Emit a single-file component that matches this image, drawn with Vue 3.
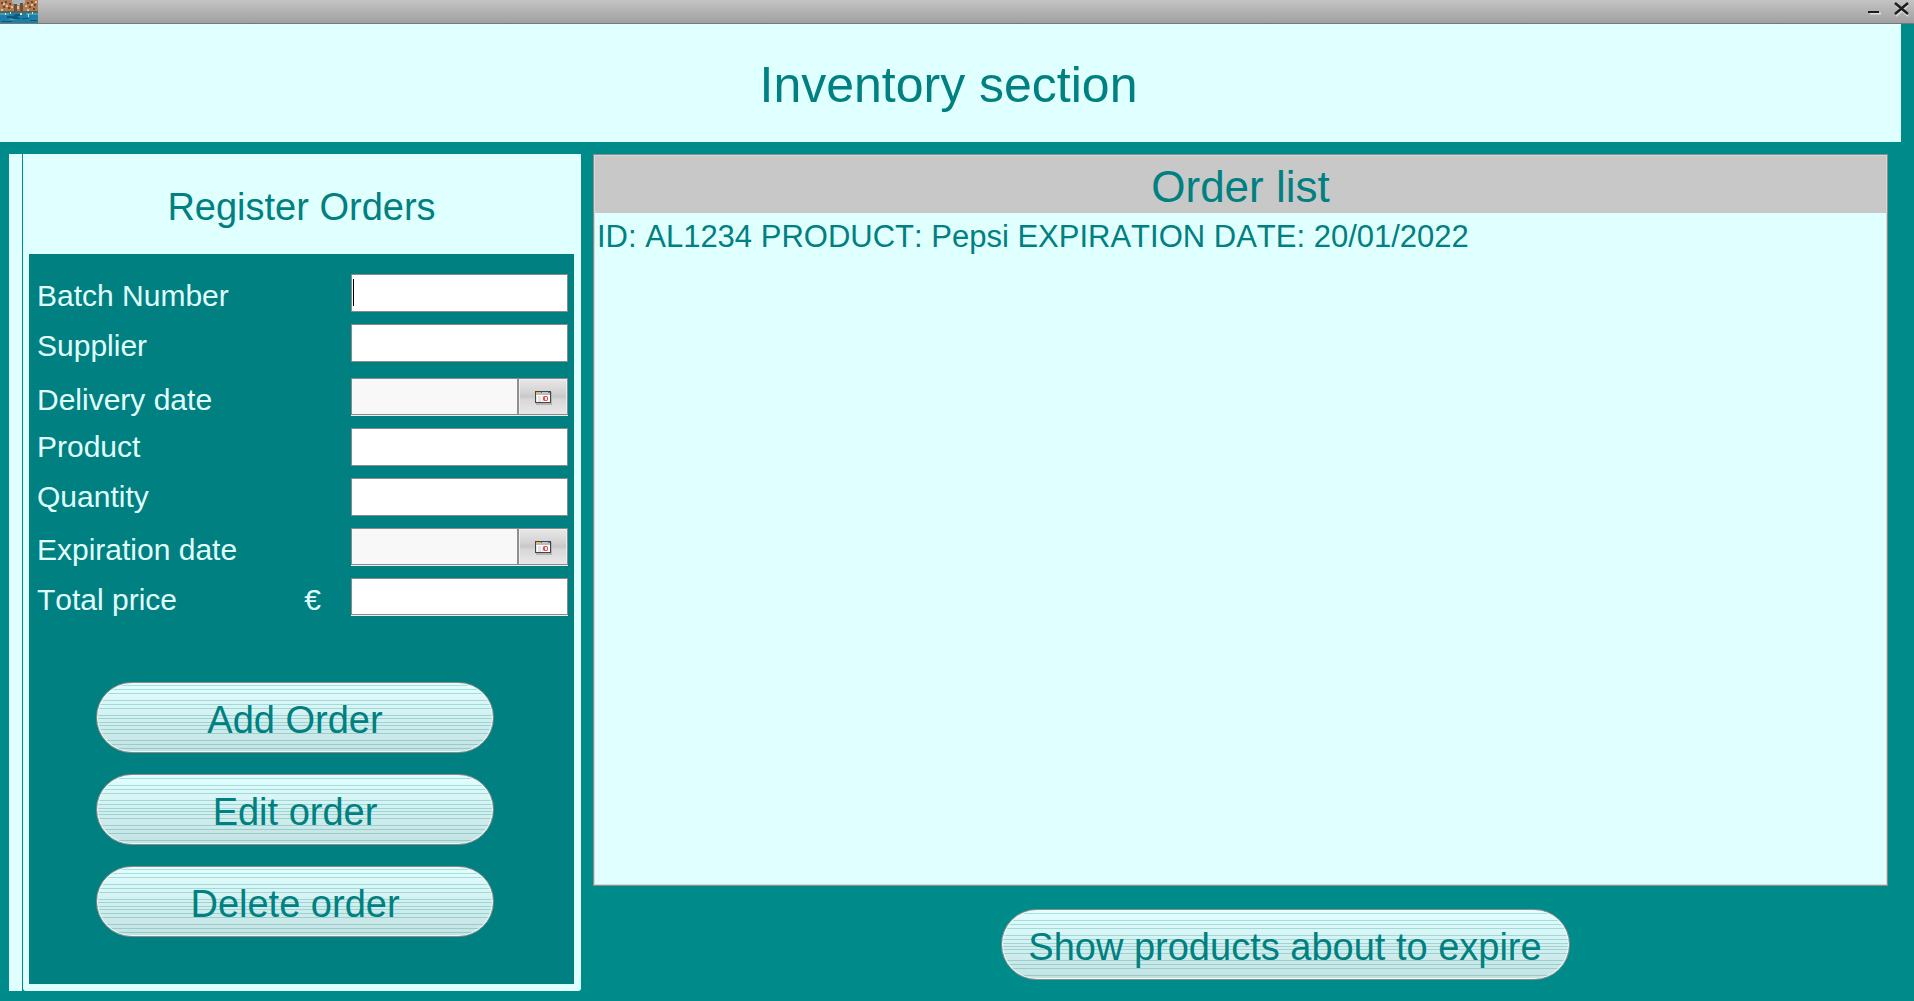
<script setup>
import { reactive } from 'vue'

const fields = [
  { id: 'batch', label: 'Batch Number', caret: true },
  { id: 'supplier', label: 'Supplier' },
  { id: 'delivery', label: 'Delivery date', date: true, spaced: true },
  { id: 'product', label: 'Product', raised: true },
  { id: 'quantity', label: 'Quantity', raised: true },
  { id: 'expiration', label: 'Expiration date', date: true },
  { id: 'price', label: 'Total price', unit: '€' },
]

const form = reactive({
  batch: '',
  supplier: '',
  delivery: '',
  product: '',
  quantity: '',
  expiration: '',
  price: '',
})

const orders = [{ id: 'AL1234', product: 'Pepsi', expires: '20/01/2022' }]
</script>

<template>
  <div class="window">
    <div class="titlebar">
      <svg class="app-icon" viewBox="0 0 38 23" aria-hidden="true">
        <rect width="38" height="23" fill="#b98a66" />
        <path d="M0 0h12l2 4h9l3-4h12v12H0z" fill="#b07a52" />
        <path d="M12 0h13v3l-2 2h-8l-3-2z" fill="#a9b4bd" />
        <path d="M14 4h3v7h-3zM20 3h3v8h-3z" fill="#67503f" />
        <path d="M1 2h2v2H1zM5 1h2v2H5zM9 3h2v2H9zM3 6h2v2H3zM8 7h2v2H8zM27 2h2v2h-2zM31 1h2v2h-2zM34 4h2v2h-2zM29 6h2v2h-2zM33 8h2v2h-2z" fill="#6d4630" />
        <path d="M3 3h2v2H3zM6 5h2v2H6zM11 6h2v2h-2zM17 6h2v3h-2zM25 5h2v2h-2zM31 4h2v2h-2zM35 1h2v2h-2zM27 9h2v2h-2zM1 9h2v2H1z" fill="#e6bf94" />
        <rect y="11" width="38" height="2" fill="#56645c" />
        <rect y="13" width="38" height="10" fill="#1c7fa8" />
        <path d="M0 13h9v2H0zM26 13h12v2H26zM9 19h6v1H9z" fill="#3aa0bf" />
        <path d="M7 16h6l3-2h4v2h-3l4 3h-7l-2-1H7zM22 18h6v1h-6zM2 21h10v1H2zM30 20h7v1h-7z" fill="#135778" />
        <path d="M5 13h1v2H5zM10 12h1v2h-1zM20 13h2v2h-2zM28 14h1v3h-1zM32 12h1v2h-1z" fill="#f0e6ae" />
      </svg>
      <div class="window-controls">
        <button type="button" class="window-button" aria-label="Minimise">
          <svg viewBox="0 0 16 16" aria-hidden="true">
            <path d="M2 12.5h11" stroke="#dedede" stroke-width="2" />
            <path d="M0 11h11" stroke="#1c1c1c" stroke-width="2" />
          </svg>
        </button>
        <button type="button" class="window-button" aria-label="Close">
          <svg viewBox="0 0 16 16" aria-hidden="true">
            <path d="M2 4l12 11M14 4L2 15" stroke="#dadada" stroke-width="2" />
            <path d="M1 2l13 11M14 2L1 13" stroke="#1c1c1c" stroke-width="2.4" />
          </svg>
        </button>
      </div>
    </div>

    <header class="banner">
      <h1>Inventory section</h1>
    </header>

    <main class="content">
      <div class="rail"></div>

      <section class="register">
        <h2>Register Orders</h2>
        <form class="register-body" @submit.prevent>
          <div class="fields">
            <div
              v-for="field in fields"
              :key="field.id"
              class="row"
              :class="{ spaced: field.spaced, raised: field.raised }"
            >
              <label :for="field.id">{{ field.label }}</label>
              <span v-if="field.unit" class="unit">{{ field.unit }}</span>
              <div class="control" :class="{ date: field.date, lit: field.date || field.unit }">
                <input
                  :id="field.id"
                  v-model="form[field.id]"
                  type="text"
                  :readonly="field.date"
                />
                <span v-if="field.caret" class="caret"></span>
                <button v-if="field.date" type="button" class="picker" :aria-label="'Choose ' + field.label">
                  <svg viewBox="0 0 17 14" shape-rendering="crispEdges" aria-hidden="true">
                    <path d="M1 12h15v2H1zM16 1h1v13h-1z" fill="#b4b4b4" />
                    <rect width="16" height="12" fill="#444" />
                    <rect x="1" y="1" width="14" height="10" fill="#fff" />
                    <rect x="1" y="1" width="5" height="1" fill="#f5b32e" />
                    <rect x="6" y="1" width="1" height="1" fill="#666" />
                    <rect x="7" y="1" width="6" height="1" fill="#a9d0fb" />
                    <rect x="13" y="1" width="2" height="1" fill="#777" />
                    <rect x="1" y="2" width="14" height="2" fill="#bdbdbd" />
                    <path d="M3 5h3v6H3zM1 5h1v6H1zM7 5h1v6H7z" fill="#e4e4e4" />
                    <rect x="8" y="5" width="5" height="5" fill="#f2b5b5" />
                    <path d="M9 5h3v1H9zM8 6h2v3H8zM12 6h1v3h-1zM9 9h3v1H9z" fill="#e55353" />
                    <rect x="10" y="6" width="2" height="3" fill="#fde8e8" />
                  </svg>
                </button>
              </div>
            </div>
          </div>

          <div class="actions">
            <button type="submit" class="pill stripes-a">Add Order</button>
            <button type="button" class="pill stripes-b">Edit order</button>
            <button type="button" class="pill stripes-a">Delete order</button>
          </div>
        </form>
      </section>

      <section class="orders">
        <div class="order-list">
          <h2>Order list</h2>
          <ul>
            <li v-for="order in orders" :key="order.id">
              ID: {{ order.id }} PRODUCT: {{ order.product }} EXPIRATION DATE: {{ order.expires }}
            </li>
          </ul>
        </div>
        <div class="orders-footer">
          <button type="button" class="pill stripes-b">Show products about to expire</button>
        </div>
      </section>
    </main>
  </div>
</template>

<style>
body {
  margin: 0;
  background: #008b8b;
}
</style>

<style scoped>
* {
  box-sizing: border-box;
}

.window {
  display: flex;
  flex-direction: column;
  min-height: 100vh;
  background: #008b8b;
  color: #008080;
  font-family: "Liberation Sans", Arial, sans-serif;
  font-kerning: none;
}

h1,
h2,
ul {
  margin: 0;
  padding: 0;
  font-weight: 400;
}

button {
  padding: 0;
  border: 0;
  background: none;
  color: inherit;
  font-family: inherit;
}

.titlebar {
  display: flex;
  justify-content: space-between;
  height: 24px;
  border-bottom: 1px solid #777;
  background: linear-gradient(#c4c4c4, #a0a0a0);
}

.app-icon {
  display: block;
  width: 38px;
  height: 23px;
}

.window-controls {
  display: flex;
  gap: 10px;
  padding: 1px 4px 0 0;
}

.window-button {
  width: 16px;
  height: 16px;
}

.window-button svg {
  display: block;
  width: 16px;
  height: 16px;
}

.banner {
  display: flex;
  align-items: center;
  justify-content: center;
  height: 118px;
  margin-right: 13px;
  padding: 4px 4px 0 0;
  background: #e0ffff;
}

.banner h1 {
  font-size: 50px;
  line-height: 60px;
}

.content {
  display: flex;
  flex: 1;
  padding: 12px 26px 10px 9px;
}

.rail {
  flex-shrink: 0;
  width: 13px;
  margin-right: 1px;
  background: #e0ffff;
}

.register {
  display: flex;
  flex-direction: column;
  flex-shrink: 0;
  width: 558px;
  padding: 0 7px 7px 6px;
  border-radius: 0 0 3px 3px;
  background: #e0ffff;
}

.register h2 {
  padding-top: 6px;
  font-size: 38px;
  line-height: 94px;
  text-align: center;
}

.register-body {
  flex: 1;
  padding: 20px 6px 46px 8px;
  background: #008080;
}

.fields {
  display: flex;
  flex-direction: column;
  gap: 12px;
}

.row {
  display: flex;
  height: 38px;
  color: #e0ffff;
  font-size: 30px;
  line-height: 38px;
}

.row label {
  flex: 1;
}

.row label,
.row .unit {
  padding-top: 3px;
}

.row.spaced {
  margin-top: 4px;
}

.row.raised label {
  padding-top: 0;
}

.unit {
  margin-right: 30px;
}

.control {
  position: relative;
  display: flex;
  width: 217px;
  border: 1px solid #8a8a8a;
  background: #fff;
}

.control.lit {
  height: 37px;
  box-shadow: 0 1px #e4f2f2;
}

.control.date {
  background: #f8f8f8;
}

.control input {
  flex: 1;
  min-width: 0;
  padding: 0 2px;
  border: 0;
  outline: 0;
  background: transparent;
  color: #000;
  font-family: inherit;
  font-size: 24px;
}

.caret {
  position: absolute;
  top: 4px;
  left: 1px;
  width: 1px;
  height: 27px;
  background: #000;
}

.picker {
  display: flex;
  align-items: center;
  justify-content: center;
  width: 50px;
  padding-top: 2px;
  border-left: 2px solid #8f8f8f;
  background: linear-gradient(#e8e8e8, #d2d2d2 40%, #c8c8c8 50%, #d8d8d8 60%, #e8e8e8);
  box-shadow: inset 1px 1px #eee, inset -1px 0 #eee;
}

.picker svg {
  width: 17px;
  height: 14px;
}

.actions {
  display: flex;
  flex-direction: column;
  align-items: center;
  gap: 21px;
  margin-top: 66px;
  padding-right: 15px;
}

.pill {
  height: 71px;
  padding-top: 4px;
  border: 1px solid #8c8c8c;
  border-radius: 36px;
  box-shadow: inset 0 0 0 1px #eefafa;
  font-size: 38px;
  line-height: 44px;
}

.actions .pill {
  width: 398px;
}

.orders-footer .pill {
  width: 569px;
}

.stripes-a {
  --line: rgba(0, 128, 128, 0.25);
  background:
    linear-gradient(
      transparent 2px, var(--line) 2px 3px, transparent 3px 6px, var(--line) 6px 7px,
      transparent 7px 10px, var(--line) 10px 11px, transparent 11px 17px, var(--line) 17px 18px,
      transparent 18px 21px, var(--line) 21px 22px, transparent 22px 25px, var(--line) 25px 26px,
      transparent 26px 32px, var(--line) 32px 33px, transparent 33px 35px, var(--line) 35px 36px,
      transparent 36px 39px, var(--line) 39px 40px, transparent 40px 42px, var(--line) 42px 43px,
      transparent 43px 46px, var(--line) 46px 47px, transparent 47px 50px, var(--line) 50px 51px,
      transparent 51px 57px, var(--line) 57px 58px, transparent 58px 61px, var(--line) 61px 62px,
      transparent 62px 65px, var(--line) 65px 66px, transparent 66px
    ),
    linear-gradient(#e2ffff, #c4e2e2);
}

.stripes-b {
  --line: rgba(0, 128, 128, 0.25);
  background:
    linear-gradient(
      transparent 3px, var(--line) 3px 4px, transparent 4px 10px, var(--line) 10px 11px,
      transparent 11px 14px, var(--line) 14px 15px, transparent 15px 18px, var(--line) 18px 19px,
      transparent 19px 25px, var(--line) 25px 26px, transparent 26px 29px, var(--line) 29px 30px,
      transparent 30px 33px, var(--line) 33px 34px, transparent 34px 36px, var(--line) 36px 37px,
      transparent 37px 39px, var(--line) 39px 40px, transparent 40px 43px, var(--line) 43px 44px,
      transparent 44px 50px, var(--line) 50px 51px, transparent 51px 54px, var(--line) 54px 55px,
      transparent 55px 58px, var(--line) 58px 59px, transparent 59px 65px, var(--line) 65px 66px,
      transparent 66px
    ),
    linear-gradient(#e2ffff, #c4e2e2);
}

.orders {
  display: flex;
  flex: 1;
  flex-direction: column;
  margin-left: 12px;
  padding-bottom: 11px;
}

.order-list {
  flex: 1;
  border: 1px solid #8c8c8c;
  border-bottom-width: 2px;
  outline: 1px solid #d8d8d8;
  outline-offset: -2px;
  background: #e0ffff;
}

.order-list h2 {
  padding-top: 6px;
  background: #c8c8c8;
  font-size: 44px;
  line-height: 52px;
  text-align: center;
}

.order-list li {
  padding: 0 3px;
  font-size: 31px;
  line-height: 47px;
  list-style: none;
}

.orders-footer {
  display: flex;
  justify-content: center;
  margin-top: 23px;
  padding-left: 89px;
}
</style>
